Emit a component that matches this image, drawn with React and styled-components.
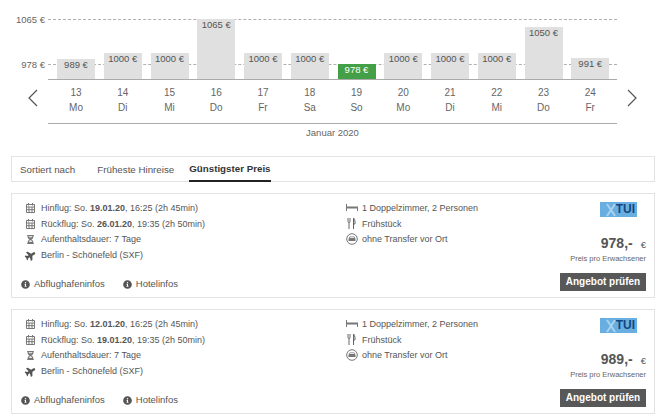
import React from "react";
import styled, { createGlobalStyle } from "styled-components";
import { FaInfoCircle, FaPlane, FaHourglassHalf } from "react-icons/fa";

const GlobalStyle = createGlobalStyle`
  html, body {
    margin: 0;
    padding: 0;
    background: #fff;
    font-family: "Liberation Sans", Arial, sans-serif;
    color: #555;
  }
  * { box-sizing: border-box; }
`;

const days = [
  { day: 13, name: "Mo", price: 989, h: 20 },
  { day: 14, name: "Di", price: 1000, h: 26 },
  { day: 15, name: "Mi", price: 1000, h: 26 },
  { day: 16, name: "Do", price: 1065, h: 60 },
  { day: 17, name: "Fr", price: 1000, h: 26 },
  { day: 18, name: "Sa", price: 1000, h: 26 },
  { day: 19, name: "So", price: 978, h: 15, best: true },
  { day: 20, name: "Mo", price: 1000, h: 26 },
  { day: 21, name: "Di", price: 1000, h: 26 },
  { day: 22, name: "Mi", price: 1000, h: 26 },
  { day: 23, name: "Do", price: 1050, h: 52 },
  { day: 24, name: "Fr", price: 991, h: 21 },
];

const offers = [
  { out: "19.01.20", back: "26.01.20", price: "978" },
  { out: "12.01.20", back: "19.01.20", price: "989" },
];

const Calendar = () => (
  <svg width="11" height="11" viewBox="0 0 11 11" fill="none" stroke="#777" strokeWidth="1">
    <path d="M1.500 2.500h8v8h-8zM1.500 5h8M3.500 1v2.500M7.500 1v2.500M4 5v5.500M7 5v5.500M1.500 7.700h8" />
  </svg>
);

const Bed = () => (
  <svg width="12" height="7" viewBox="0 0 12 7" fill="#777">
    <path d="M0 0h1v7H0zM1 2.500h11v2H1zM11 4h1v3h-1z" />
  </svg>
);

const Cutlery = () => (
  <svg width="9" height="11" viewBox="0 0 9 11" fill="none" stroke="#666" strokeWidth="1">
    <path d="M1 0v3.500q0 1 1 1t1-1V0M2 4.500V11M6.500 11V0q1.500 1 1.500 4v2H6.500" />
  </svg>
);

const Transfer = () => (
  <svg width="12" height="12" viewBox="0 0 12 12" fill="none" stroke="#777">
    <circle cx="6" cy="6" r="5.300" />
    <path d="M2.500 8V6l1.300-2.500h4.400L9.500 6v2z" fill="#777" stroke="none" />
    <path d="M4 4.500h4" stroke="#fff" strokeWidth=".8" />
  </svg>
);

const Chevron = ({ flip }) => (
  <svg width="12" height="18" viewBox="0 0 12 18" fill="none" stroke="#555" strokeWidth="1.2">
    <path d={flip ? "M2 1l8 8-8 8" : "M10 1L2 9l8 8"} />
  </svg>
);

const Chart = styled.section`
  display: flex;
  align-items: flex-start;
  height: 156px;
  padding-top: 19px;
`;

const Arrow = styled.div`
  flex: none;
  width: 48px;
  padding: 70px 0 0 ${(p) => (p.$right ? 9 : 27)}px;
`;

const Plot = styled.div`
  position: relative;
  width: 569px;
  flex: none;
`;

const AxisLine = styled.div`
  position: absolute;
  left: 0;
  right: 0;
  top: ${(p) => p.$top}px;
  border-top: 1px dashed #b0b0b0;
`;

const AxisLabel = styled.span`
  position: absolute;
  right: 100%;
  margin-right: 3px;
  top: ${(p) => p.$top - 5}px;
  font-size: 9.500px;
  line-height: 12px;
  white-space: nowrap;
  color: #666;
`;

const Bars = styled.div`
  position: relative;
  z-index: 1;
  display: grid;
  grid-template-columns: repeat(12, 38px);
  column-gap: 8.750px;
  height: 61px;
  padding-left: 9px;
  align-items: end;
  border-bottom: 1px solid #aaa;
`;

const Bar = styled.div`
  background: ${(p) => (p.$best ? "#43a047" : "#e0e0e0")};
  color: ${(p) => (p.$best ? "#fff" : "#555")};
  font-size: 9.500px;
  line-height: 11px;
  text-align: center;
  overflow: hidden;
  white-space: nowrap;
`;

const Days = styled.div`
  display: grid;
  grid-template-columns: repeat(12, 38px);
  column-gap: 8.750px;
  padding-left: 9px;
  padding-top: 5px;
  height: 44px;
  border-bottom: 1px solid #aaa;
`;

const Day = styled.div`
  text-align: center;
  font-size: 10px;
  line-height: 15px;
  color: #666;
`;

const Month = styled.div`
  text-align: center;
  font-size: 9.500px;
  line-height: 12px;
  padding-top: 3px;
  color: #666;
`;

const SortBar = styled.nav`
  display: flex;
  align-items: stretch;
  height: 26px;
  margin: 0 10px 11px 11px;
  border: 1px solid #e3e3e3;
  padding-left: 8px;
  font-size: 9.750px;
`;

const SortTab = styled.div`
  display: flex;
  align-items: center;
  margin-right: ${(p) => p.$gap}px;
  color: ${(p) => (p.$active ? "#333" : "#555")};
  font-weight: ${(p) => (p.$active ? 700 : 400)};
  border-bottom: ${(p) => (p.$active ? "2px solid #222" : "none")};
  margin-bottom: -1px;
`;

const Card = styled.article`
  display: grid;
  grid-template-columns: 324px 1fr auto;
  height: 105px;
  margin: 0 10px 11px 11px;
  border: 1px solid #e3e3e3;
  padding: 6px 8px 6px 9px;
  font-size: 9px;
  color: #555;
`;

const InfoList = styled.div`
  display: flex;
  flex-direction: column;
`;

const InfoRow = styled.div`
  display: flex;
  align-items: center;
  height: 15.750px;
  white-space: nowrap;
`;

const IconSlot = styled.span`
  display: flex;
  justify-content: center;
  align-items: center;
  width: 13px;
  margin-left: ${(p) => p.$indent || 0}px;
  margin-right: 4px;
  color: #555;
`;

const Links = styled.div`
  display: flex;
  gap: 18px;
  margin-top: 15px;
  font-size: 9.500px;
`;

const InfoLink = styled.span`
  display: flex;
  align-items: center;
  gap: 4px;
  line-height: 12px;
`;

const Side = styled.div`
  display: flex;
  flex-direction: column;
  align-items: flex-end;
  width: 90px;
`;

const Logo = styled.div`
  display: flex;
  justify-content: flex-end;
  align-items: center;
  width: 37px;
  height: 15px;
  margin: 2px 9px 0 0;
  padding-right: 2px;
  background: #68aee0;
  color: #14457f;
  font-size: 12px;
  line-height: 15px;
  font-weight: 700;
`;

const Price = styled.div`
  margin-top: 17px;
  font-size: 14px;
  line-height: 18px;
  font-weight: 700;
  color: #555;
  small {
    font-size: 9.500px;
    font-weight: 400;
    margin-left: 8px;
  }
`;

const PriceNote = styled.div`
  font-size: 7.500px;
  line-height: 10px;
  color: #666;
  white-space: nowrap;
`;

const CheckButton = styled.div`
  width: 86px;
  height: 18px;
  margin-top: 9px;
  background: #585858;
  color: #fff;
  font-size: 10px;
  line-height: 18px;
  font-weight: 700;
  text-align: center;
`;

function Offer({ offer }) {
  return (
    <Card>
      <div>
        <InfoList>
          <InfoRow>
            <IconSlot $indent={3}><Calendar /></IconSlot>
            <span>Hinflug: So. <b>{offer.out}</b>, 16:25 (2h 45min)</span>
          </InfoRow>
          <InfoRow>
            <IconSlot $indent={3}><Calendar /></IconSlot>
            <span>Rückflug: So. <b>{offer.back}</b>, 19:35 (2h 50min)</span>
          </InfoRow>
          <InfoRow>
            <IconSlot $indent={3}><FaHourglassHalf size={9} color="#777" /></IconSlot>
            <span>Aufenthaltsdauer: 7 Tage</span>
          </InfoRow>
          <InfoRow>
            <IconSlot $indent={3}><FaPlane size={11} style={{ transform: "rotate(-30deg)" }} /></IconSlot>
            <span>Berlin - Schönefeld (SXF)</span>
          </InfoRow>
        </InfoList>
        <Links>
          <InfoLink><FaInfoCircle size={9} />Abflughafeninfos</InfoLink>
          <InfoLink><FaInfoCircle size={9} />Hotelinfos</InfoLink>
        </Links>
      </div>
      <InfoList>
        <InfoRow>
          <IconSlot><Bed /></IconSlot>
          <span>1 Doppelzimmer, 2 Personen</span>
        </InfoRow>
        <InfoRow>
          <IconSlot><Cutlery /></IconSlot>
          <span>Frühstück</span>
        </InfoRow>
        <InfoRow>
          <IconSlot><Transfer /></IconSlot>
          <span>ohne Transfer vor Ort</span>
        </InfoRow>
      </InfoList>
      <Side>
        <Logo>
          <svg width="10" height="15" viewBox="0 0 10 15" stroke="#a9d3ef" strokeWidth="2">
            <path d="M1 2l8 12M9 2L1 14" />
          </svg>
          TUI
        </Logo>
        <Price>{offer.price},-<small>€</small></Price>
        <PriceNote>Preis pro Erwachsener</PriceNote>
        <CheckButton>Angebot prüfen</CheckButton>
      </Side>
    </Card>
  );
}

export default function App() {
  return (
    <>
      <GlobalStyle />
      <Chart>
        <Arrow><Chevron /></Arrow>
        <Plot>
          <Bars>
            {days.map((d) => (
              <Bar key={d.day} $best={d.best} style={{ height: d.h }}>{d.price} €</Bar>
            ))}
          </Bars>
          <AxisLine $top={0} />
          <AxisLine $top={45} />
          <AxisLabel $top={0}>1065 €</AxisLabel>
          <AxisLabel $top={45}>978 €</AxisLabel>
          <Days>
            {days.map((d) => (
              <Day key={d.day}>{d.day}<br />{d.name}</Day>
            ))}
          </Days>
          <Month>Januar 2020</Month>
        </Plot>
        <Arrow $right><Chevron flip /></Arrow>
      </Chart>
      <SortBar>
        <SortTab $gap={22}>Sortiert nach</SortTab>
        <SortTab $gap={15}>Früheste Hinreise</SortTab>
        <SortTab $active $gap={0}>Günstigster Preis</SortTab>
      </SortBar>
      {offers.map((o) => (
        <Offer key={o.out} offer={o} />
      ))}
    </>
  );
}
